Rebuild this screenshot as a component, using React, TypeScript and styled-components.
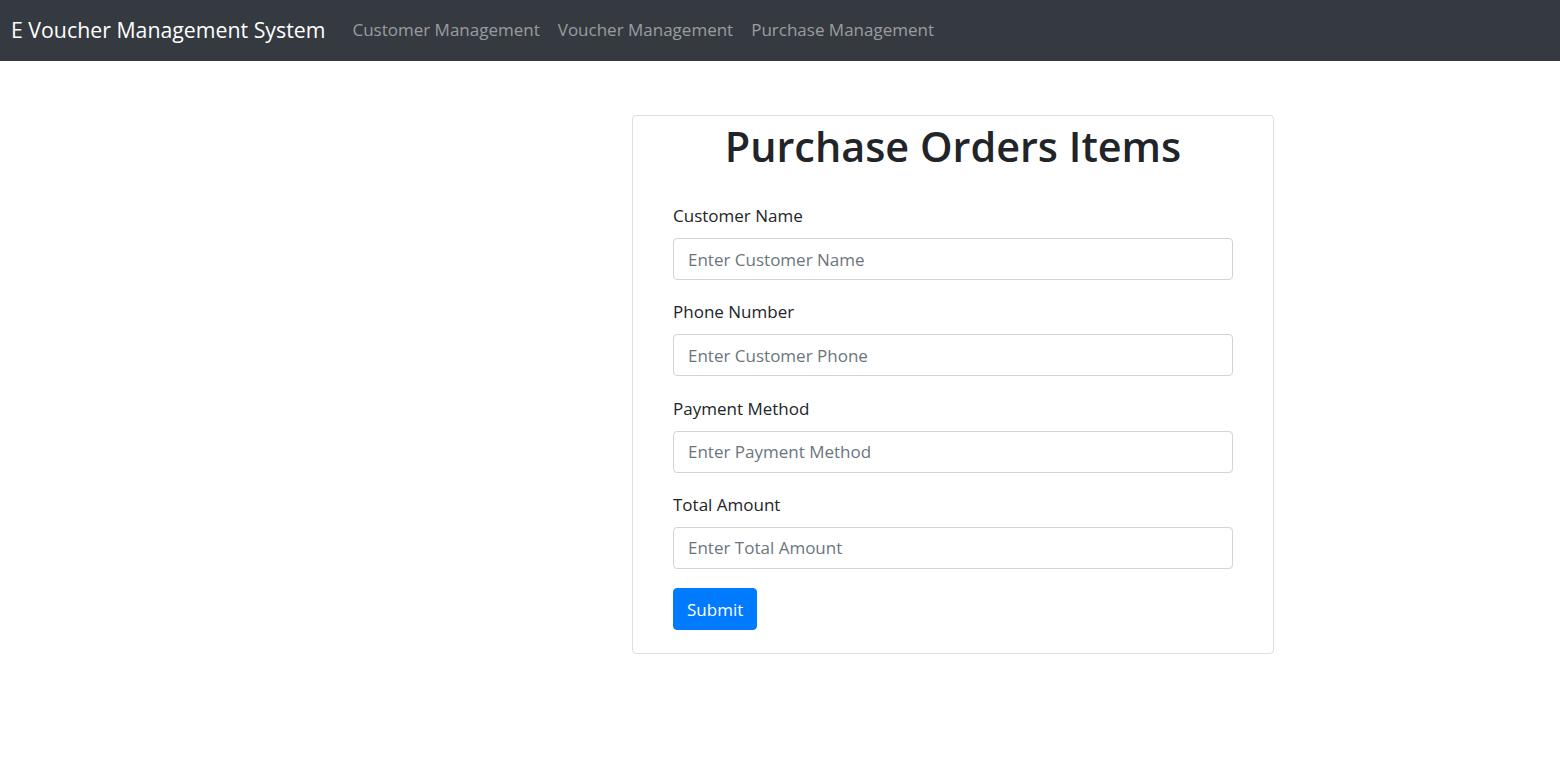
import React from "react";
import styled, { createGlobalStyle } from "styled-components";

const GlobalStyle = createGlobalStyle`
  html, body {
    margin: 0;
    padding: 0;
    background: #fff;
  }
  body {
    font-family: "Open Sans", "Noto Sans", sans-serif;
    color: #212529;
    -webkit-font-smoothing: antialiased;
  }
  * {
    box-sizing: border-box;
  }
`;

const StyledNavbar = styled.nav`
  display: flex;
  align-items: center;
  height: 61px;
  padding: 0 11px 2px;
  background: #343a40;
`;

const StyledBrand = styled.a`
  color: #fff;
  font-size: 21.3px;
  margin-right: 18px;
  text-decoration: none;
  white-space: nowrap;
`;

const StyledNavLinks = styled.div`
  display: flex;
  align-items: center;
`;

const StyledNavLink = styled.a`
  color: rgba(255, 255, 255, 0.5);
  font-size: 17px;
  padding: 0 9px;
  text-decoration: none;
  white-space: nowrap;
`;

const StyledPage = styled.main`
  display: grid;
  grid-template-columns: 632px 642px 1fr;
  padding-top: 54px;
`;

const StyledCard = styled.section`
  grid-column: 2;
  border: 1px solid rgba(0, 0, 0, 0.125);
  border-radius: 4px;
  padding: 2px 40px 23px;
`;

const StyledTitle = styled.h1`
  margin: 0 0 29px;
  text-align: center;
  font-size: 41.4px;
  font-weight: 600;
  line-height: 56px;
  color: #212529;
`;

const StyledForm = styled.form`
  display: flex;
  flex-direction: column;
`;

const StyledFormGroup = styled.div`
  display: flex;
  flex-direction: column;
  margin-bottom: 19.3px;
`;

const StyledLabel = styled.label`
  font-size: 17px;
  line-height: 26px;
  margin-bottom: 9px;
  color: #212529;
`;

const StyledInput = styled.input`
  height: 42px;
  width: 100%;
  padding: 0 14px;
  font-family: inherit;
  font-size: 17px;
  color: #495057;
  border: 1px solid #ced4da;
  border-radius: 4px;
  outline: none;
  &::placeholder {
    color: #6c757d;
  }
`;

const StyledSubmit = styled.button`
  align-self: flex-start;
  height: 42px;
  padding: 0 13px;
  font-family: inherit;
  font-size: 17px;
  color: #fff;
  background: #007bff;
  border: 1px solid #007bff;
  border-radius: 4px;
  cursor: pointer;
`;

const fields = [
  { label: "Customer Name", placeholder: "Enter Customer Name" },
  { label: "Phone Number", placeholder: "Enter Customer Phone" },
  { label: "Payment Method", placeholder: "Enter Payment Method" },
  { label: "Total Amount", placeholder: "Enter Total Amount" },
];

export default function App(): JSX.Element {
  return (
    <>
      <GlobalStyle />
      <StyledNavbar>
        <StyledBrand href="#">E Voucher Management System</StyledBrand>
        <StyledNavLinks>
          <StyledNavLink href="#">Customer Management</StyledNavLink>
          <StyledNavLink href="#">Voucher Management</StyledNavLink>
          <StyledNavLink href="#">Purchase Management</StyledNavLink>
        </StyledNavLinks>
      </StyledNavbar>
      <StyledPage>
        <StyledCard>
          <StyledTitle>Purchase Orders Items</StyledTitle>
          <StyledForm onSubmit={(e) => e.preventDefault()}>
            {fields.map((field) => (
              <StyledFormGroup key={field.label}>
                <StyledLabel>{field.label}</StyledLabel>
                <StyledInput type="text" placeholder={field.placeholder} />
              </StyledFormGroup>
            ))}
            <StyledSubmit type="submit">Submit</StyledSubmit>
          </StyledForm>
        </StyledCard>
      </StyledPage>
    </>
  );
}
